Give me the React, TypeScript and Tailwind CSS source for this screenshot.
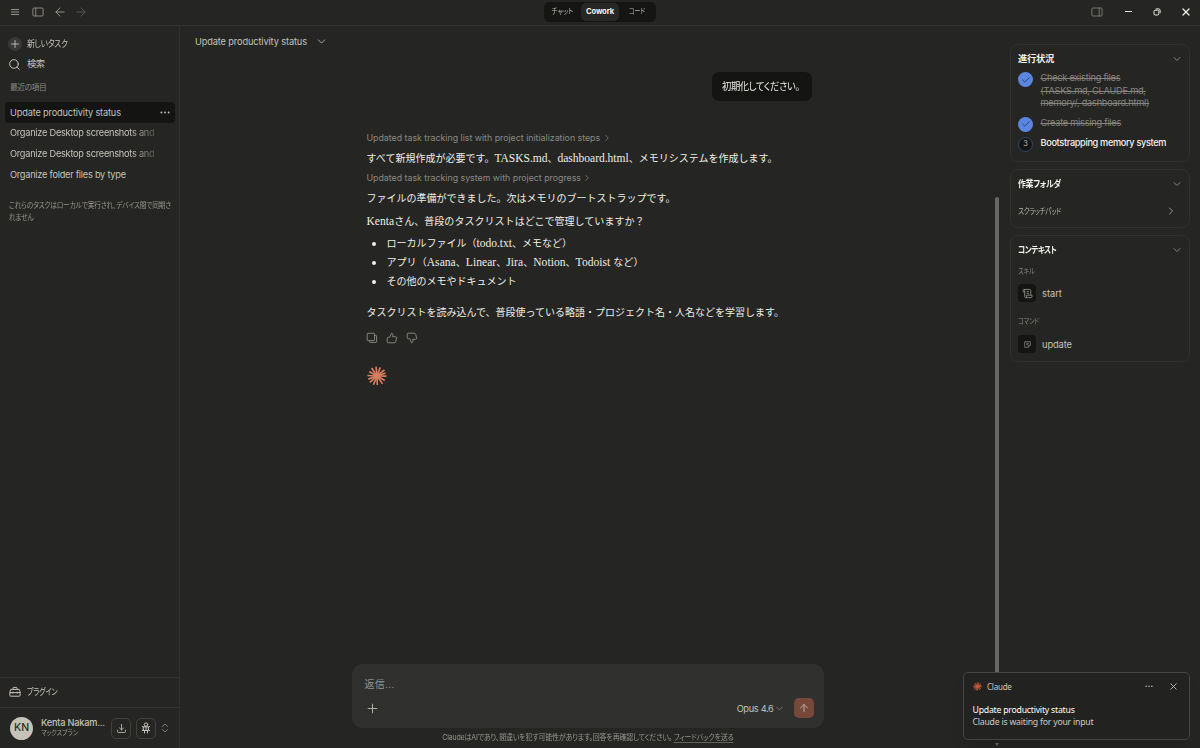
import React from 'react';
import {
  ArrowLeft,
  ArrowRight,
  ArrowUp,
  Check,
  ChevronDown,
  ChevronRight,
  ChevronsUpDown,
  Plus,
  Search,
  X,
} from 'lucide-react';

interface IconProps {
  className?: string;
}

interface CardProps {
  title: string;
  titleClass?: string;
  className?: string;
  children: React.ReactNode;
}

const RAYS = [
  [1, 9.4], [30, 9], [55, 9.6], [88, 9], [112, 9.4], [138, 9.6],
  [160, 9.2], [183, 9.6], [210, 9], [236, 9.6], [264, 9.4], [291, 9.2], [321, 9.6], [341, 9],
];

const Burst: React.FC<IconProps> = ({ className }) => (
  <svg viewBox="0 0 20 20" className={className} stroke="currentColor" strokeWidth="1.65">
    {RAYS.map(([deg, len]) => (
      <line
        key={deg}
        x1="10"
        y1="10"
        x2={10 + len * Math.cos((deg * Math.PI) / 180)}
        y2={10 + len * Math.sin((deg * Math.PI) / 180)}
      />
    ))}
  </svg>
);

const MenuIcon: React.FC<IconProps> = ({ className }) => (
  <svg viewBox="0 0 8 8" className={className} stroke="currentColor" strokeWidth="0.9" fill="none">
    <path d="M0 1.500h8M0 4h8M0 6.500h8" />
  </svg>
);

const PanelIcon: React.FC<IconProps & { right?: boolean }> = ({ className, right }) => (
  <svg viewBox="0 0 12 10" className={className} stroke="currentColor" strokeWidth="0.8" fill="none">
    <rect x="0.9" y="1" width="10.2" height="8" rx="1" />
    <path d={right ? 'M8.2 1v8' : 'M3.8 1v8'} />
  </svg>
);

const Dots: React.FC<IconProps> = ({ className }) => (
  <svg viewBox="0 0 10 3" className={className} fill="currentColor">
    <circle cx="1.4" cy="1.5" r="0.9" />
    <circle cx="5" cy="1.5" r="0.9" />
    <circle cx="8.6" cy="1.5" r="0.9" />
  </svg>
);

const ToolboxIcon: React.FC<IconProps> = ({ className }) => (
  <svg viewBox="0 0 12 12" className={className} stroke="currentColor" strokeWidth="1" fill="none">
    <path d="M4 3.4V2.2c0-.5.3-.8.8-.8h2.4c.5 0 .8.3.8.8v1.2M1.8 3.4h8.4l.9 2.4v3.6c0 .5-.3.8-.8.8H1.700c-.5 0-.8-.3-.8-.8V5.800zM.9 6.600h10.200M3.800 5.800v1.800M8.200 5.800v1.800" />
  </svg>
);

const TrayIcon: React.FC<IconProps> = ({ className }) => (
  <svg viewBox="0 0 12 12" className={className} stroke="currentColor" strokeWidth="0.9" fill="none" strokeLinecap="round" strokeLinejoin="round">
    <path d="M6 1.500v6M3.800 5.400 6 7.600l2.200-2.200M1.700 7.800v1.700c0 .5.3.8.8.8h7c.5 0 .8-.3.8-.8V7.800" />
  </svg>
);

const PersonIcon: React.FC<IconProps> = ({ className }) => (
  <svg viewBox="0 0 12 12" className={className} stroke="currentColor" strokeWidth="1" fill="none" strokeLinecap="round" strokeLinejoin="round">
    <circle cx="6" cy="2.600" r="1.700" />
    <path d="M3.600 4.800h4.800v3.700H3.600zM3.600 5.500 2.400 4.200M8.400 5.500l1.200-1.300M3.600 7.500 2.200 8.800M8.400 7.500l1.400 1.300M4.500 8.500v2.500M7.500 8.500v2.500M6 4.500v4" />
  </svg>
);

const CopyIcon: React.FC<IconProps> = ({ className }) => (
  <svg viewBox="0 0 12 12" className={className} stroke="currentColor" strokeWidth="0.85" fill="none" strokeLinejoin="round">
    <rect x="1.200" y="1.300" width="7.300" height="7.300" rx="0.800" />
    <path d="M8.500 3.500h1.300c.5 0 .8.300.8.800v5.300c0 .5-.3.800-.8.800H4.500c-.5 0-.8-.3-.8-.8V8.600" />
  </svg>
);

const ThumbIcon: React.FC<IconProps> = ({ className }) => (
  <svg viewBox="0 0 12 12" className={className} stroke="currentColor" strokeWidth="0.85" fill="none" strokeLinejoin="round">
    <path d="M2.200 5.300h1.500L5.500 1.300c1.100 0 1.700.7 1.500 1.700l-.4 1.700h3c.8 0 1.200.6 1 1.300L9.700 9.700c-.2.700-.7 1.100-1.400 1.100H2.200c-.6 0-1-.4-1-1V6.300c0-.6.4-1 1-1z" />
  </svg>
);

const ScrollIcon: React.FC<IconProps> = ({ className }) => (
  <svg viewBox="0 0 12 12" className={className} stroke="currentColor" strokeWidth="0.9" fill="none" strokeLinejoin="round">
    <path d="M2.800 4.200H1.200V2.700c0-.7.4-1.200 1-1.200h6.300c.6 0 1 .5 1 1.200v4.800M2.200 1.500c.4 0 .7.500.7 1.200v6.600c0 .7.4 1.200 1 1.200h6.200c.6 0 .9-.5.9-1.200V7.900H5v1.400c0 .7-.4 1.200-1 1.200M4.900 3.900h2.700M4.900 5.900h2.700" />
  </svg>
);

const NoteIcon: React.FC<IconProps> = ({ className }) => (
  <svg viewBox="0 0 12 12" className={className} stroke="currentColor" strokeWidth="1" fill="none" strokeLinejoin="round">
    <path d="M2.200 2.200h7.600v4.800L7 9.800H2.200zM9.800 7H7v2.800M4 4.300h4M4 6.200h2.500" />
  </svg>
);

const Card: React.FC<CardProps> = ({ title, titleClass, className, children }) => (
  <section className={`rounded-[8px] border border-[#30302e] px-[7px] ${className}`}>
    <div className="mt-[6px] flex h-[15px] items-center justify-between">
      <h2 className={`origin-left text-[9.300px] font-bold text-[#f2f1ec] ${titleClass}`}>{title}</h2>
      <ChevronDown className="-mr-px size-[12px] text-[#96958f]" strokeWidth={1.700} />
    </div>
    {children}
  </section>
);

// Latin runs inside the serif body are set larger than the kana around them
const L: React.FC<{ children: React.ReactNode }> = ({ children }) => (
  <span className="text-[11.500px]">{children}</span>
);

const recents = [
  { title: 'Update productivity status', active: true },
  { title: 'Organize Desktop screenshots and', fade: true },
  { title: 'Organize Desktop screenshots and', fade: true },
  { title: 'Organize folder files by type' },
];

const steps = [
  { text: 'Check existing files (TASKS.md, CLAUDE.md, memory/, dashboard.html)', done: true },
  { text: 'Create missing files', done: true },
  { text: 'Bootstrapping memory system', done: false },
];

const TitleBar = () => (
  <header className="flex h-[26px] shrink-0 items-center border-b border-[#31312f]">
    <div className="flex w-[544px] items-center pb-[2px] pl-[11px] text-[#a3a29c]">
      <MenuIcon className="size-[8px]" />
      <PanelIcon className="ml-[12.500px] h-[10px] w-[12px]" />
      <ArrowLeft className="ml-[9px] size-[14px]" strokeWidth={1.500} />
      <ArrowRight className="ml-[7.500px] size-[14px] text-[#5f5e5a]" strokeWidth={1.500} />
    </div>
    <nav className="mb-[2px] flex h-[20px] w-[112px] items-center rounded-[6px] bg-[#151514] text-[7.500px] text-[#bcbbb4]">
      <span className="w-[37px] scale-x-[0.890] text-center">チャット</span>
      <span className="flex h-[18px] w-[38px] items-center justify-center rounded-[5px] bg-[#272725] text-[7.600px] font-bold tracking-[-0.150px] text-[#f5f4ef]">Cowork</span>
      <span className="w-[36px] scale-x-[0.780] text-center">コード</span>
    </nav>
    <div className="flex flex-1 items-center justify-end pr-[8px] pb-[2px] text-[#f0efea]">
      <PanelIcon right className="h-[10px] w-[12px] text-[#8c8b86]" />
      <span className="ml-[22px] h-px w-[7px] bg-[#e0dfda]" />
      <svg viewBox="0 0 8 8" className="ml-[21px] size-[8px]" fill="none" stroke="currentColor" strokeWidth="1">
        <rect x="1" y="2.200" width="4.800" height="4.800" rx="1.200" />
        <path d="M2.800.9h2.900c.8 0 1.400.6 1.400 1.400v2.900" />
      </svg>
      <X className="ml-[19px] size-[12px]" strokeWidth={2.400} />
    </div>
  </header>
);

const Sidebar = () => (
  <aside className="flex w-[180px] shrink-0 flex-col border-r border-[#31312f] text-[#c5c3bb]">
    <div className="mt-[8px] flex h-[20px] items-center pl-[8px] text-[9.300px]">
      <span className="flex size-[14px] items-center justify-center rounded-full bg-[#393937]">
        <Plus className="size-[12px]" strokeWidth={1.800} />
      </span>
      <span className="ml-[5px] origin-left scale-x-[0.840] tracking-[-0.400px] whitespace-nowrap">新しいタスク</span>
    </div>
    <div className="flex h-[20px] items-center pl-[8px] text-[9.300px]">
      <Search className="size-[13px]" strokeWidth={1.800} />
      <span className="ml-[6px] tracking-[-0.500px]">検索</span>
    </div>
    <div className="mt-[5px] h-[16px] pl-[10px] text-[7.800px] leading-[16px] tracking-[-0.500px] text-[#8b8a83]">最近の項目</div>
    <ul className="mt-[7px] px-[5px] text-[9.200px]">
      {recents.map((item, i) => (
        <li
          key={i}
          className={`-mr-px flex h-[20.600px] items-center rounded-[4px] pt-px pl-[5px] whitespace-nowrap ${item.active ? 'bg-[#141413] tracking-[-0.150px]' : 'tracking-[-0.240px]'}`}
        >
          <span
            className={`w-[145px] leading-[14px] ${item.fade ? '[mask-image:linear-gradient(to_right,black_120px,transparent_155px)]' : ''}`}
          >
            {item.title}
          </span>
          {item.active && <Dots className="ml-[5px] h-[3px] w-[10px]" />}
        </li>
      ))}
    </ul>
    <p className="mt-[16px] ml-[9px] origin-left scale-x-[0.880] text-[7.600px] leading-[12px] tracking-[-0.200px] whitespace-nowrap text-[#96958e]">
      これらのタスクはローカルで実行され、デバイス間で同期さ
      <br />
      れません
    </p>
    <div className="mt-auto flex h-[30px] shrink-0 items-center border-t border-[#31312f] pb-px pl-[9px] text-[8.800px]">
      <ToolboxIcon className="size-[12px]" />
      <span className="ml-[6px] origin-left scale-x-[0.810] tracking-[-0.300px]">プラグイン</span>
    </div>
    <div className="flex h-[41px] shrink-0 items-center border-t border-[#31312f] pl-[10px]">
      <span className="flex size-[23px] items-center justify-center rounded-full bg-[#c5c3b8] text-[10.500px] font-medium text-[#2b2b28]">KN</span>
      <div className="ml-[8px] w-[70px] pb-px whitespace-nowrap">
        <div className="text-[9.200px] leading-[11px] font-medium tracking-[-0.200px]">Kenta Nakam...</div>
        <div className="origin-left scale-x-[0.860] text-[7.300px] leading-[10px] tracking-[-0.200px] text-[#96958e]">マックスプラン</div>
      </div>
      <span className="flex h-[21px] w-[20px] items-center justify-center rounded-[5px] border border-[#41413e]">
        <TrayIcon className="size-[11px]" />
      </span>
      <span className="ml-[5px] flex h-[21px] w-[20px] items-center justify-center rounded-[5px] border border-[#41413e]">
        <PersonIcon className="size-[12px]" />
      </span>
      <ChevronsUpDown className="ml-[3px] size-[12px] text-[#96958e]" strokeWidth={1.600} />
    </div>
  </aside>
);

const Conversation = () => (
  <div className="flex w-[472px] flex-1 flex-col px-[15px] font-['Liberation_Serif','Noto_Sans_CJK_JP',serif] text-[10px] whitespace-nowrap text-[#f0eee6] [font-feature-settings:normal]">
    <div className="-mr-[3px] mt-[16px] flex h-[29px] w-[100px] items-center self-end rounded-[7px] bg-[#141413] pl-[10px] font-['Inter','Noto_Sans_CJK_JP',sans-serif] text-[10px] tracking-[-0.400px] [font-feature-settings:'palt']">
      <span className="origin-left scale-x-[0.930]">初期化してください。</span>
    </div>
    <div className="mt-[27px] flex h-[20px] items-center font-['Inter','Noto_Sans_CJK_JP',sans-serif] text-[8.800px] text-[#8b8a84]">
      Updated task tracking list with project initialization steps
      <ChevronRight className="ml-[2px] size-[10px]" strokeWidth={1.700} />
    </div>
    <p className="h-[20px] leading-[20px]">
      すべて新規作成が必要です。<L>TASKS.md</L>、<L>dashboard.html</L>、メモリシステムを作成します。
    </p>
    <div className="flex h-[20px] items-center font-['Inter','Noto_Sans_CJK_JP',sans-serif] text-[8.800px] text-[#8b8a84]">
      Updated task tracking system with project progress
      <ChevronRight className="ml-px size-[10px]" strokeWidth={1.700} />
    </div>
    <p className="h-[20px] leading-[21px]">ファイルの準備ができました。次はメモリのブートストラップです。</p>
    <p className="mt-[3px] h-[20px] leading-[20px] tracking-[0.040px]">
      <L>Kenta</L>さん、普段のタスクリストはどこで管理していますか？
    </p>
    <ul className="mt-[3px] ml-[20px] list-none leading-[19px] [&>li]:flex [&>li]:h-[19px] [&>li]:items-center [&>li]:before:mr-[11px] [&>li]:before:-ml-[15px] [&>li]:before:size-[4px] [&>li]:before:rounded-full [&>li]:before:bg-[#f0eee6]">
      <li><span>ローカルファイル（<L>todo.txt</L>、メモなど）</span></li>
      <li className="tracking-[0.060px]"><span>アプリ（<L>Asana</L>、<L>Linear</L>、<L>Jira</L>、<L>Notion</L>、<L>Todoist </L>など）</span></li>
      <li><span>その他のメモやドキュメント</span></li>
    </ul>
    <p className="mt-[12px] h-[20px] leading-[20px]">
      タスクリストを読み込んで、普段使っている略語・プロジェクト名・人名などを学習します。
    </p>
    <div className="mt-[9px] flex gap-[8px] text-[#96958e]">
      <CopyIcon className="-ml-px size-[12px]" />
      <ThumbIcon className="size-[12px]" />
      <ThumbIcon className="size-[12px] -scale-y-100" />
    </div>
    <Burst className="mt-[22px] size-[20px] text-[#d97f5f]" />
  </div>
);

const Composer = () => (
  <div className="w-[472px] shrink-0">
    <div className="h-[64px] rounded-[11px] bg-[#30302e] px-[10px] pt-[12px]">
      <div className="pl-[3px] text-[10px] leading-[16px] tracking-[0.300px] text-[#96958e]">返信...</div>
      <div className="mt-[6px] flex h-[20px] items-center pl-[3px]">
        <Plus className="size-[15px] text-[#b8b6ae]" strokeWidth={1.500} />
        <span className="ml-auto pt-px text-[9.200px] tracking-[-0.300px] text-[#c5c3bb]">Opus 4.6</span>
        <ChevronDown className="size-[11px] text-[#85847e]" strokeWidth={1.700} />
        <button className="ml-[9px] flex size-[20px] items-center justify-center rounded-[5px] bg-[#77493a]">
          <ArrowUp className="size-[12px] text-[#bcaea4]" strokeWidth={2} />
        </button>
      </div>
    </div>
    <p className="h-[20px] scale-x-[0.910] text-center text-[7.700px] leading-[20px] tracking-[-0.200px] whitespace-nowrap text-[#96958e]">
      ClaudeはAIであり、間違いを犯す可能性があります。回答を再確認してください。
      <span className="ml-[2px] border-b border-[#62615d]">フィードバックを送る</span>
    </p>
  </div>
);

const DetailPanel = () => (
  <aside className="flex w-[180px] shrink-0 flex-col gap-[7px] pt-[18px]">
    <Card title="進行状況" titleClass="tracking-[-0.300px]" className="h-[118px]">
      <ol className="mt-[6px] text-[9.200px] leading-[12.500px] tracking-[-0.240px]">
        {steps.map((step, i) => (
          <li key={step.text} className={`flex ${i === 0 ? 'mb-[7px]' : 'mb-[5px]'}`}>
            {step.done ? (
              <span className="flex size-[15px] shrink-0 items-center justify-center rounded-full bg-[#5b86df] text-[#223a68]">
                <Check className="size-[10px]" strokeWidth={2} />
              </span>
            ) : (
              <span className="flex size-[15px] shrink-0 items-center justify-center rounded-full border border-[#34466e] bg-[#141413] text-[7.500px] text-[#b8b6ae]">
                {i + 1}
              </span>
            )}
            <span className={`ml-[7.500px] w-[120px] ${step.done ? 'text-[#85847e] line-through' : 'font-medium tracking-[-0.340px] whitespace-nowrap text-[#f5f4ef]'}`}>
              {step.text}
            </span>
          </li>
        ))}
      </ol>
    </Card>
    <Card title="作業フォルダ" titleClass="scale-x-[0.850] tracking-[-0.400px]" className="h-[59px]">
      <div className="mt-[10px] flex h-[20px] items-center justify-between pr-[5px] text-[8px] tracking-[-0.400px] text-[#b0aea6]">
        <span className="origin-left scale-x-[0.830]">スクラッチパッド</span>
        <ChevronRight className="size-[12px]" strokeWidth={1.700} />
      </div>
    </Card>
    <Card title="コンテキスト" titleClass="scale-x-[0.800] tracking-[-0.500px]" className="h-[127px]">
      <div className="mt-[8px] h-[14px] origin-left scale-x-[0.800] text-[7.800px] leading-[13px] tracking-[-0.300px] text-[#85847e]">スキル</div>
      <div className="mt-[5px] flex h-[18px] items-center text-[9.300px] text-[#c5c3bb]">
        <span className="mr-[6px] flex size-[18px] items-center justify-center rounded-[4px] bg-[#141413] text-[#96958e]">
          <ScrollIcon className="size-[11px]" />
        </span>
        <span className="pt-px">start</span>
      </div>
      <div className="mt-[13px] h-[14px] origin-left scale-x-[0.800] text-[7.800px] leading-[13px] tracking-[-0.300px] text-[#85847e]">コマンド</div>
      <div className="mt-[6px] flex h-[18px] items-center text-[9.300px] tracking-[-0.100px] text-[#c5c3bb]">
        <span className="mr-[6px] flex size-[18px] items-center justify-center rounded-[4px] bg-[#141413] text-[#85847e]">
          <NoteIcon className="size-[9px]" />
        </span>
        <span className="pt-px">update</span>
      </div>
    </Card>
  </aside>
);

const Toast = () => (
  <div className="absolute top-[672px] left-[963px] h-[68px] w-[227px] rounded-[5px] border border-[#454543] bg-[#222221] px-[8.500px] font-['Noto_Sans',sans-serif] text-[8.700px] tracking-[-0.220px] text-[#c9c9c6] shadow-lg">
    <div className="mt-[6px] flex h-[15px] items-center">
      <Burst className="size-[9px] text-[#d9643f]" />
      <span className="ml-[5.500px] text-[8px]">Claude</span>
      <Dots className="ml-auto h-[2.500px] w-[8px]" />
      <X className="mr-[2px] ml-[15px] size-[11px]" strokeWidth={1.800} />
    </div>
    <div className="mt-[9.500px] leading-[12px] text-white">Update productivity status</div>
    <div className="leading-[12px]">Claude is waiting for your input</div>
  </div>
);

export default function App() {
  return (
    <div className="relative flex h-[748px] w-[1200px] flex-col overflow-hidden bg-[#252523] font-['Inter','Noto_Sans_CJK_JP',sans-serif] [font-feature-settings:'palt']">
      <TitleBar />
      <div className="flex min-h-0 flex-1">
        <Sidebar />
        <main className="flex w-[815px] shrink-0 flex-col items-center">
          <div className="flex h-[30px] w-full shrink-0 items-center pt-px pl-[15px] text-[9.200px] tracking-[-0.110px] text-[#c5c3bb]">
            Update productivity status
            <ChevronDown className="ml-[8px] size-[13px]" strokeWidth={1.500} />
          </div>
          <Conversation />
          <Composer />
        </main>
        <div className="flex w-[15px] shrink-0 flex-col">
          <div className="mt-[171px] h-[540px] w-[4px] rounded-full bg-[#686866]" />
          <span className="mt-[6px] self-start border-x-[2px] border-t-[3px] border-x-transparent border-t-[#686866]" />
        </div>
        <DetailPanel />
      </div>
      <Toast />
    </div>
  );
}
